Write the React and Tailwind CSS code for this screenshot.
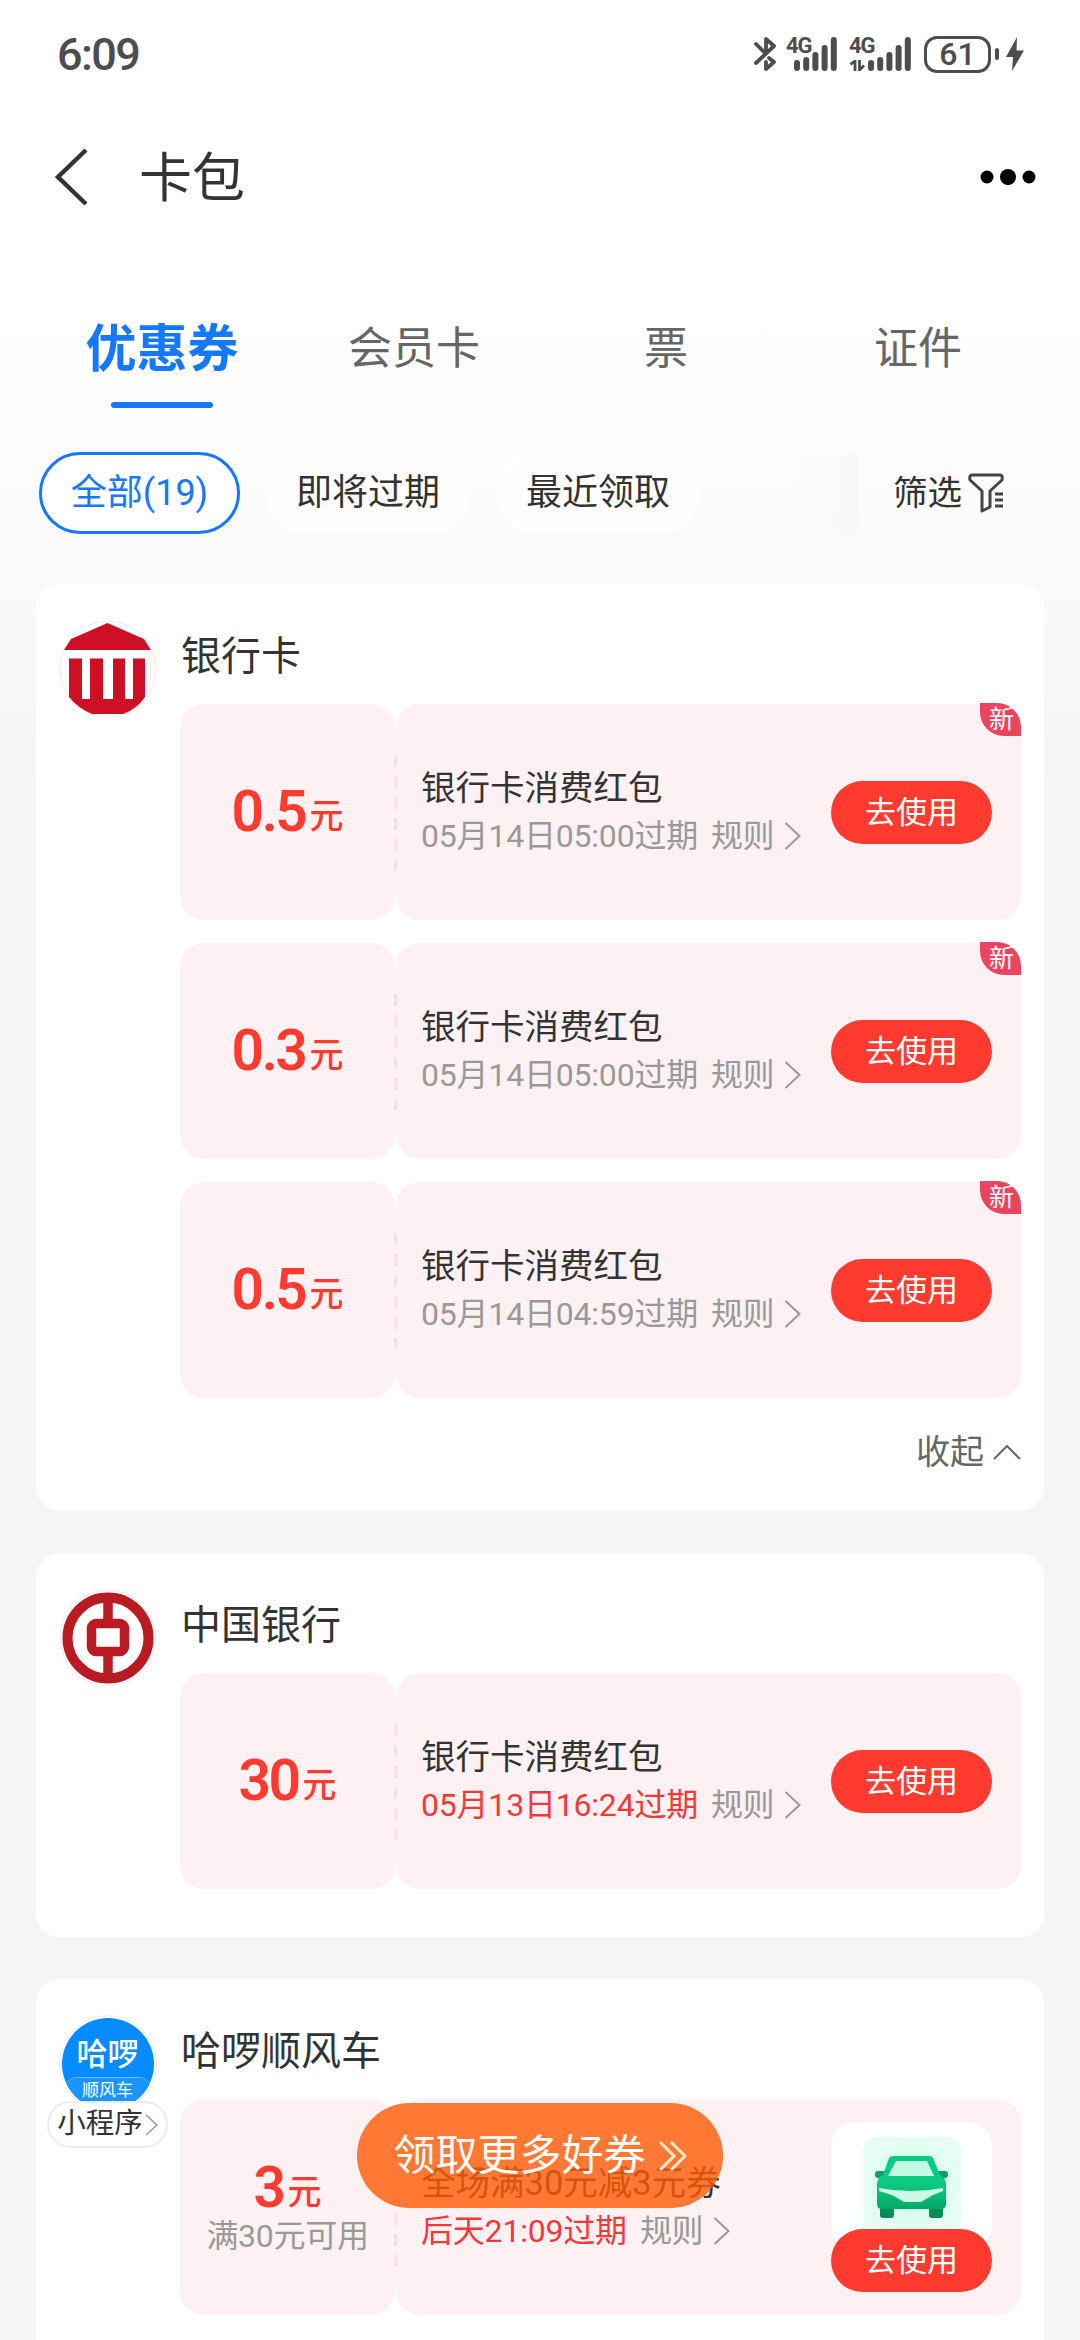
import { useState } from 'react';

//one section per merchant, each holding its coupons
const sections = [
  {
    id: 'bank',
    name: '银行卡',
    logo: 'bank',
    collapsible: true,
    coupons: [
      { amount: '0.5', title: '银行卡消费红包', expiry: '05月14日05:00过期', isNew: true },
      { amount: '0.3', title: '银行卡消费红包', expiry: '05月14日05:00过期', isNew: true },
      { amount: '0.5', title: '银行卡消费红包', expiry: '05月14日04:59过期', isNew: true },
    ],
  },
  {
    id: 'boc',
    name: '中国银行',
    logo: 'boc',
    coupons: [{ amount: '30', title: '银行卡消费红包', expiry: '05月13日16:24过期', urgent: true }],
  },
  {
    id: 'hello',
    name: '哈啰顺风车',
    logo: 'hello',
    miniApp: true,
    coupons: [
      {
        amount: '3',
        condition: '满30元可用',
        title: '全场满30元减3元券',
        expiry: '后天21:09过期',
        urgent: true,
        hasImage: true,
      },
    ],
  },
];

const tabs = ['优惠券', '会员卡', '票', '证件'];
const filters = ['全部(19)', '即将过期', '最近领取'];

//signal bars, heights are the same for both sims
function SignalBars() {
  return (
    <svg width="43" height="34" viewBox="0 0 43 34" fill="#4d4d4d">
      <rect x="0" y="23" width="6" height="11" rx="3" />
      <rect x="9.2" y="20" width="6" height="14" rx="3" />
      <rect x="18.4" y="15" width="6" height="19" rx="3" />
      <rect x="27.6" y="8" width="6" height="26" rx="3" />
      <rect x="36.8" y="0" width="6" height="34" rx="3" />
    </svg>
  );
}

function StatusBar() {
  return (
    <header className="flex h-[108px] items-center justify-between pr-[56px] pl-[57px] text-[#4d4d4d]">
      <span className="text-[45px] leading-none font-medium tracking-[-1.6px]">6:09</span>
      <div className="flex items-center">
        <svg width="22" height="36" viewBox="0 0 22 36" fill="none" stroke="#4d4d4d" strokeWidth="3.8" strokeLinecap="round" strokeLinejoin="round">
          <path d="M2 8 L10 16 M2 27 L20 10 L12 3 V17 M15 22 L20 26 L12 33 V26" />
        </svg>
        <div className="relative ml-[18px]">
          <SignalBars />
          <span className="absolute -top-0.5 -left-[8px] text-[22px] leading-none font-bold tracking-[-1px]">4G</span>
        </div>
        <div className="relative ml-[31px]">
          <SignalBars />
          <span className="absolute -top-0.5 -left-[19px] text-[22px] leading-none font-bold tracking-[-1px]">4G</span>
          <svg className="absolute bottom-0 -left-[18px]" width="15" height="11" viewBox="0 0 15 11" fill="none" stroke="#4d4d4d" strokeWidth="2.8">
            <path d="M0.5 4.5 L5 1 V11 M9.5 0 V10 L14 5.5" />
          </svg>
        </div>
        <div className="ml-[13px] flex h-[37px] w-[67px] items-center justify-center rounded-[13px] border-3 border-[#4d4d4d] text-[32px] leading-none font-medium">
          61
        </div>
        <span className="ml-[4px] h-3 w-[4px] rounded-full bg-[#4d4d4d]" />
        <svg className="ml-[7px]" width="18" height="34" viewBox="0 0 18 34" fill="#4d4d4d">
          <path d="M11 0 L0 20 H7 L6 34 L18 13.5 H10.5 Z" />
        </svg>
      </div>
    </header>
  );
}

function TitleBar() {
  return (
    <div className="flex h-[138px] items-center pr-[44px] pl-[54px]">
      <svg width="36" height="58" viewBox="0 0 36 58" fill="none" stroke="#333" strokeWidth="4.5">
        <path d="M32 2 L4 29 L32 56" />
      </svg>
      <h1 className="ml-[49px] pt-1 text-[53px] leading-none text-[#333]">卡包</h1>
      <svg className="ml-auto" width="56" height="18" viewBox="0 0 56 18">
        <circle cx="7" cy="9" r="6.5" />
        <circle cx="28" cy="9" r="8" />
        <circle cx="49" cy="9" r="6.5" />
      </svg>
    </div>
  );
}

function Chevron({ className }) {
  return (
    <svg className={className} width="17" height="28" viewBox="0 0 17 28" fill="none" stroke="currentColor" strokeWidth="2">
      <path d="M1.5 1 L15.5 14 L1.5 27" />
    </svg>
  );
}

function BankLogo() {
  return (
    <svg width="98" height="98" viewBox="0 0 98 98">
      <circle cx="49" cy="49" r="48" fill="#fff" stroke="#f5e9e9" />
      <path d="M48.5 3 L85 19 L92 30 H5 L12 19 Z" fill="#cd1025" />
      <path d="M10 38.5 H23 V79 H31 V38.5 H44 V79 H54 V38.5 H66 V79 H74 V38.5 H86 V77 Q78 89 64 94 H33 Q20 89 10 77 Z" fill="#cd1025" />
    </svg>
  );
}

function BocLogo() {
  return (
    <svg width="98" height="98" viewBox="0 0 98 98" fill="none" stroke="#b81c22">
      <circle cx="49" cy="49" r="48" fill="#fff" stroke="#f5e9e9" />
      <circle cx="49" cy="49" r="40.5" strokeWidth="10" />
      <path d="M49 9 V34 M49 64 V90" strokeWidth="9.5" />
      <rect x="32.5" y="34.5" width="33" height="28" rx="5" strokeWidth="9.5" />
    </svg>
  );
}

function HelloLogo() {
  return (
    <div className="size-[98px] rounded-full border border-[#e6f1fb] p-[2px]">
      <div className="flex size-full flex-col items-center overflow-hidden rounded-full bg-[#078cff] pt-[21px] text-white">
        <span className="text-[31px] leading-[32px] font-medium">哈啰</span>
        <span className="mt-[6px] w-[86px] rounded-t-[12px] border-t border-[#6fbdff] bg-[#1a95ff] pt-px text-center text-[17px] leading-[22px]">
          顺风车
        </span>
        <span className="w-[86px] flex-1 bg-[#1a95ff]" />
      </div>
    </div>
  );
}

function MerchantLogo({ type }) {
  if (type === 'bank') return <BankLogo />;
  if (type === 'boc') return <BocLogo />;
  return <HelloLogo />;
}

function CarPicture() {
  return (
    <svg width="98" height="98" viewBox="0 0 98 98">
      <defs>
        <radialGradient id="mint">
          <stop offset="0" stopColor="#c4fbe5" />
          <stop offset="1" stopColor="#e6fdf5" />
        </radialGradient>
        <linearGradient id="body" x1="0" y1="0" x2="0" y2="1">
          <stop offset="0" stopColor="#0bcb80" />
          <stop offset="0.5" stopColor="#0bcb80" />
          <stop offset="1" stopColor="#04a867" />
        </linearGradient>
      </defs>
      <rect width="98" height="98" rx="14" fill="url(#mint)" />
      <rect x="17" y="68" width="14" height="13" rx="3" fill="#0a8a58" />
      <rect x="66" y="68" width="14" height="13" rx="3" fill="#0a8a58" />
      <rect x="12" y="34" width="12" height="7" rx="3" fill="#1b9a6a" />
      <rect x="73" y="34" width="12" height="7" rx="3" fill="#1b9a6a" />
      <path d="M30 19 H66 Q69 19 70 21 L77 38 Q83 41 83 48 V67 Q83 72 78 72 H19 Q14 72 14 67 V48 Q14 41 20 38 L26 21 Q27 19 30 19 Z" fill="url(#body)" />
      <path d="M33 24 H64 L71 39 H25 Z" fill="#c4f9e5" />
      <path d="M16 51 Q48 57 80 51 V54 L70 58 L58 65 H41 L29 58 L16 54 Z" fill="#c9fbe8" />
    </svg>
  );
}

function Coupon({ coupon }) {
  return (
    <article className="relative flex h-[216px] gap-px">
      <div className="flex w-[215px] flex-col items-center justify-center rounded-3xl bg-[#fef1f3] pt-1.5">
        <p className="flex items-baseline text-[#ff3b30]">
          <span className="text-[57px] leading-[46px] font-semibold tracking-[-2.5px]">{coupon.amount}</span>
          <span className="ml-[4px] -translate-y-[3px] text-[34px] leading-[46px] font-medium">元</span>
        </p>
        {coupon.condition && (
          <p className="-mt-0.5 text-[32px] leading-[40px] tracking-[-0.3px] text-[#999]">{coupon.condition}</p>
        )}
      </div>
      <div className="flex flex-1 items-center rounded-3xl bg-[#fef1f3] pr-[29px] pl-[25px]">
        <div>
          <h3 className="text-[34.5px] leading-[48px] text-[#333]">{coupon.title}</h3>
          <div className="flex items-center text-[32px] leading-[48px] text-[#999]">
            <span className={coupon.urgent ? 'tracking-[-0.2px] text-[#f03a38]' : 'tracking-[-0.2px]'}>{coupon.expiry}</span>
            <span className="ml-[13px] tracking-[-0.5px]">规则</span>
            <Chevron className="ml-[10px]" />
          </div>
        </div>
        <div className="ml-auto flex w-[161px] flex-col">
          {coupon.hasImage && (
            <div className="-mb-[20px] flex h-[127px] justify-center rounded-3xl bg-white pt-[15px]">
              <CarPicture />
            </div>
          )}
          <button className="relative h-[63px] rounded-full bg-[#ff3b30] text-[31px] leading-none text-white">去使用</button>
        </div>
      </div>
      {/* perforation between the amount and the details */}
      <svg className="absolute top-[51px] left-[214px]" width="3" height="116" viewBox="0 0 3 116">
        <path d="M1.5 0 V116" stroke="#fae0e3" strokeWidth="3" strokeDasharray="12 9" />
      </svg>
      {coupon.isNew && (
        <span className="absolute -top-px right-0 flex h-[33px] w-[41px] items-center justify-center rounded-tr-3xl rounded-bl-3xl bg-[#e9455f] pl-0.5 text-[25px] leading-none text-white">
          新
        </span>
      )}
    </article>
  );
}

function MerchantSection({ section }) {
  const [open, setOpen] = useState(true);
  const shown = open ? section.coupons : section.coupons.slice(0, 1);

  return (
    <section className="flex rounded-3xl bg-white pt-9 pr-[23px] pb-12 pl-[10px]">
      <div className="flex w-[123px] shrink-0 flex-col items-center">
        <MerchantLogo type={section.logo} />
        {section.miniApp && (
          <span className="relative -mt-3 flex h-[47px] w-[121px] items-center justify-center rounded-full border-2 border-[#ececec] bg-white text-[28.5px] leading-none text-[#333]">
            小程序
            <Chevron className="ml-[2px] h-6 w-[13px] text-[#999]" />
          </span>
        )}
      </div>
      <div className="ml-[11px] flex-1">
        <h2 className="h-[84px] pt-2 pl-px text-[40px] leading-[58px] text-[#333]">{section.name}</h2>
        <div className="flex flex-col gap-[23px]">
          {shown.map((coupon, i) => (
            <Coupon key={i} coupon={coupon} />
          ))}
        </div>
        {section.collapsible && (
          <button onClick={() => setOpen(!open)} className="mt-[31px] -mb-3 ml-auto flex h-[46px] items-center text-[34px] leading-none text-[#666]">
            收起
            <svg className="ml-[9px]" width="28" height="15" viewBox="0 0 28 15" fill="none" stroke="#666" strokeWidth="2">
              <path d="M1 14 L14 1 L27 14" />
            </svg>
          </button>
        )}
      </div>
    </section>
  );
}

export default function App() {
  const [activeTab, setActiveTab] = useState(0);
  const [activeFilter, setActiveFilter] = useState(0);

  return (
    <div className="relative h-[2340px] w-[1080px] overflow-hidden bg-[#f5f5f5] bg-[linear-gradient(#fff_300px,#fcfcfc_480px,#f5f5f5_780px)] font-['Roboto','Noto_Sans_CJK_SC',sans-serif]">
      <StatusBar />
      <TitleBar />

      <nav className="mt-[56px] flex px-9">
        {tabs.map((tab, i) => (
          <button key={tab} onClick={() => setActiveTab(i)} className="flex h-[106px] flex-1 flex-col items-center">
            <span
              className={
                i === activeTab
                  ? 'text-[51px] leading-[95px] font-bold text-[#1677ff]'
                  : 'text-[44px] leading-[94px] text-[#666]'
              }
            >
              {tab}
            </span>
            {i === activeTab && <span className="mt-[5px] h-[6px] w-[102px] rounded-full bg-[#1677ff]" />}
          </button>
        ))}
      </nav>

      <div className="mt-[44px] flex h-[82px] items-center pl-[39px] text-[36px] leading-none">
        <div className="flex gap-[26px]">
          {filters.map((filter, i) => (
            <button
              key={filter}
              onClick={() => setActiveFilter(i)}
              className={
                i === activeFilter
                  ? 'h-[82px] w-[201px] rounded-full border-3 border-[#1677ff] bg-white text-[#1677ff]'
                  : 'h-[82px] w-[204px] rounded-full bg-[#fefefe] text-[#333]'
              }
            >
              {filter}
            </button>
          ))}
        </div>
        <div className="ml-auto h-[81px] w-[65px] bg-linear-to-r from-[#fbfbfb]/0 to-[#f8f8f8]" />
        <button className="ml-[35px] flex items-center pr-[76px] text-[34.5px] text-[#333]">
          筛选
          <svg className="ml-[6px]" width="36" height="40" viewBox="0 0 36 40" fill="none" stroke="#444" strokeWidth="3" strokeLinejoin="round">
            <path d="M4 2 H32 Q35 2 34 7 L22 18 V34 L14 38 V18 L2 7 Q1 2 4 2 Z" />
            <path d="M27 21 H35 M27 27 H35 M27 33 H35" />
          </svg>
        </button>
      </div>

      <main className="mt-[50px] flex flex-col gap-[42px] px-9">
        {sections.map((section) => (
          <MerchantSection key={section.id} section={section} />
        ))}
      </main>

      {/* floating call to action, lets the coupon text shine through */}
      <button className="absolute top-[2103px] left-[357px] flex h-[105px] w-[366px] items-center justify-center rounded-full bg-[#ff5b05]/80 text-[42px] leading-none text-white">
        领取更多好券
        <svg className="ml-[13px]" width="28" height="32" viewBox="0 0 28 32" fill="none" stroke="#ffe9cc" strokeWidth="3">
          <path d="M1 2 L15 16 L1 30 M12 2 L26 16 L12 30" />
        </svg>
      </button>
    </div>
  );
}
